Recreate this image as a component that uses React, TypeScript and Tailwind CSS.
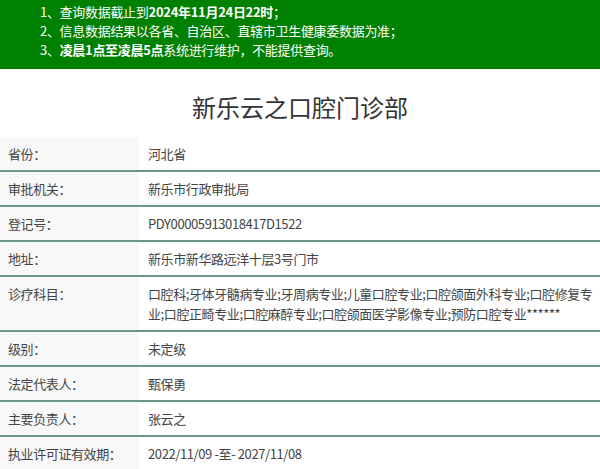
import React from 'react';

const rows: { label: string; value: string }[] = [
  { label: '省份：', value: '河北省' },
  { label: '审批机关：', value: '新乐市行政审批局' },
  { label: '登记号：', value: 'PDY00005913018417D1522' },
  { label: '地址：', value: '新乐市新华路远洋十层3号门市' },
  {
    label: '诊疗科目：',
    value:
      '口腔科;牙体牙髓病专业;牙周病专业;儿童口腔专业;口腔颌面外科专业;口腔修复专业;口腔正畸专业;口腔麻醉专业;口腔颌面医学影像专业;预防口腔专业******',
  },
  { label: '级别：', value: '未定级' },
  { label: '法定代表人：', value: '甄保勇' },
  { label: '主要负责人：', value: '张云之' },
  { label: '执业许可证有效期：', value: '2022/11/09 -至- 2027/11/08' },
];

export default function App() {
  return (
    <div className="w-[600px] h-[469px] overflow-hidden bg-white font-['Microsoft_YaHei','Noto_Sans_CJK_SC',sans-serif] text-[#333]">
      {/* notice banner */}
      <div className="bg-[#008000] text-white text-[13px] tracking-[-0.3px] leading-[19px] pl-10 pt-[2px] pb-[10px]">
        <p>
          1、查询数据截止到<b>2024年11月24日22时</b>；
        </p>
        <p>2、信息数据结果以各省、自治区、直辖市卫生健康委数据为准；</p>
        <p>
          3、<b>凌晨1点至凌晨5点</b>系统进行维护，不能提供查询。
        </p>
      </div>

      <h1 className="text-center text-[24px] leading-[36px] pt-[20px] pb-[12px] text-[#333]">
        新乐云之口腔门诊部
      </h1>

      <div className="text-[13px] leading-[20px] tracking-[-0.4px]">
        {rows.map((row) => (
          <div
            key={row.label}
            className="grid grid-cols-[139px_1fr] border-b-2 border-[#6b9985] last:border-b-0"
          >
            <div className="bg-[#f8f8f8] pl-2 pt-[7px] pb-[6px] text-[#444]">{row.label}</div>
            <div className="pl-[9px] pt-[7px] pb-[6px] text-[#444]">{row.value}</div>
          </div>
        ))}
      </div>
    </div>
  );
}
